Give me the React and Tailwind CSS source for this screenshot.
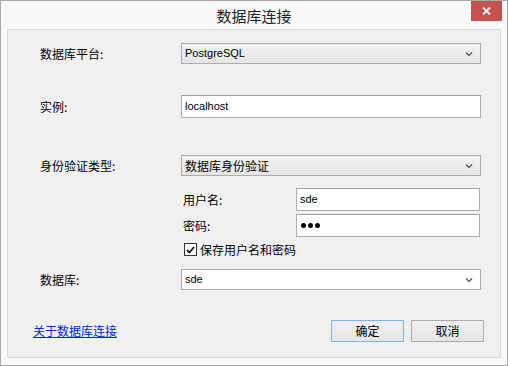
import React from 'react';

const cjk = { fontFamily: '"Noto Sans CJK SC", "Liberation Sans", sans-serif' };
const latin = { fontFamily: '"Liberation Sans", "Noto Sans CJK SC", sans-serif' };

const Chevron = () => (
  <svg width="8" height="5" viewBox="0 0 8 5" className="absolute right-[7px] top-1/2 -translate-y-1/2">
    <path d="M1 1 L4 4 L7 1" fill="none" stroke="#606060" strokeWidth="1.5" />
  </svg>
);

const Combo = ({ value, white = false, font = latin }) => (
  <div
    className={`relative w-[300px] h-[21px] border flex items-center pl-[3px] text-[11px] text-black ${
      white ? 'bg-white border-[#acacac]' : 'bg-gradient-to-b from-[#f2f2f2] to-[#e5e5e5] border-[#acacac]'
    }`}
    style={font}
  >
    <span className={font === cjk ? 'text-[12px]' : ''}>{value}</span>
    <Chevron />
  </div>
);

const TextBox = ({ children, className = '' }) => (
  <div
    className={`h-[23px] bg-white border border-[#abadb3] border-t-[#a0a0a0] flex items-center pl-[3px] text-[11px] text-black ${className}`}
    style={latin}
  >
    {children}
  </div>
);

const Label = ({ children, className = '' }) => (
  <span className={`text-[12px] text-black leading-none ${className}`} style={cjk}>
    {children}
  </span>
);

export default function App() {
  return (
    <div className="w-[508px] h-[366px] bg-[#f9f9f9] border border-[#a9a9a9] flex flex-col">
      {/* title bar */}
      <div className="relative h-[28px] flex items-center justify-center">
        <span className="text-[15px] text-[#222] mt-[3px]" style={cjk}>数据库连接</span>
        <div className="absolute right-[5px] top-0 w-[31px] h-[20px] bg-[#c75050] flex items-center justify-center">
          <svg width="9" height="8" viewBox="0 0 9 8">
            <path d="M1 0.5 L8 7.5 M8 0.5 L1 7.5" stroke="#fff" strokeWidth="1.8" />
          </svg>
        </div>
      </div>

      {/* client area */}
      <div className="mx-[6px] h-[329px] border border-[#dadada] bg-[#f0f0f0] flex flex-col">
        <div className="flex items-center mt-[13px] h-[21px]">
          <Label className="w-[173px] pl-[32px]">数据库平台:</Label>
          <Combo value="PostgreSQL" />
        </div>

        <div className="flex items-center mt-[31px] h-[23px]">
          <Label className="w-[173px] pl-[32px]">实例:</Label>
          <TextBox className="w-[300px]">localhost</TextBox>
        </div>

        <div className="flex items-center mt-[37px] h-[21px]">
          <Label className="w-[173px] pl-[32px]">身份验证类型:</Label>
          <Combo value="数据库身份验证" font={cjk} />
        </div>

        <div className="flex items-center mt-[12px] h-[23px] pl-[175px]">
          <Label className="w-[113px]">用户名:</Label>
          <TextBox className="w-[184px]">sde</TextBox>
        </div>

        <div className="flex items-center mt-[3px] h-[23px] pl-[175px]">
          <Label className="w-[113px]">密码:</Label>
          <TextBox className="w-[184px]">
            <span className="flex gap-[2px] pl-[1px]">
              <span className="w-[5px] h-[5px] rounded-full bg-black" />
              <span className="w-[5px] h-[5px] rounded-full bg-black" />
              <span className="w-[5px] h-[5px] rounded-full bg-black" />
            </span>
          </TextBox>
        </div>

        <div className="flex items-center mt-[6px] h-[13px] pl-[176px] gap-[3px]">
          <div className="w-[13px] h-[13px] bg-white border border-[#333] flex items-center justify-center">
            <svg width="9" height="8" viewBox="0 0 9 8">
              <path d="M1 4 L3.5 6.5 L8 1" fill="none" stroke="#111" strokeWidth="1.8" />
            </svg>
          </div>
          <Label>保存用户名和密码</Label>
        </div>

        <div className="flex items-center mt-[13px] h-[21px]">
          <Label className="w-[173px] pl-[32px]">数据库:</Label>
          <Combo value="sde" white />
        </div>

        <div className="flex items-center mt-[30px] h-[22px]">
          <a
            href="#"
            className="ml-[25px] text-[12px] text-[#0026e6] underline leading-none"
            style={cjk}
          >
            关于数据库连接
          </a>
          <button
            className="ml-auto w-[73px] h-[22px] border border-[#7eb4ea] bg-gradient-to-b from-[#f0f0f0] to-[#e5e5e5] text-[12px] text-black"
            style={cjk}
          >
            确定
          </button>
          <button
            className="ml-[7px] mr-[16px] w-[73px] h-[22px] border border-[#acacac] bg-gradient-to-b from-[#f0f0f0] to-[#e5e5e5] text-[12px] text-black"
            style={cjk}
          >
            取消
          </button>
        </div>
      </div>
    </div>
  );
}
